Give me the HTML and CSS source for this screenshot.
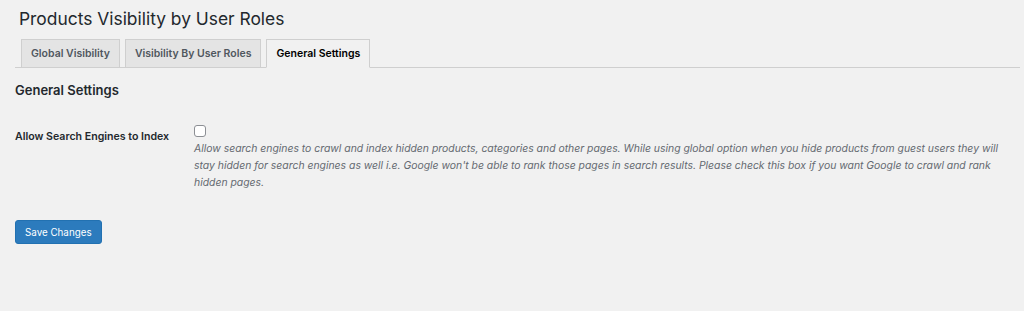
FILE: index.html
```html
<!DOCTYPE html>
<html lang="en">
<head>
    <meta charset="UTF-8">
    <meta name="viewport" content="width=device-width, initial-scale=1.0">
    <title>Products Visibility by User Roles</title>
    <link rel="stylesheet" href="styles.css">
</head>
<body>

<div class="wrap">
    <h1 class="page-title">Products Visibility by User Roles</h1>

    <nav class="nav-tabs">
        <a class="nav-tab" href="#">Global Visibility</a>
        <a class="nav-tab" href="#">Visibility By User Roles</a>
        <a class="nav-tab active" href="#">General Settings</a>
    </nav>

    <form class="settings">
        <h2 class="section-title">General Settings</h2>

        <div class="form-row">
            <label class="row-label" for="allow_index">Allow Search Engines to Index</label>
            <div class="row-field">
                <input type="checkbox" id="allow_index" class="check">
                <p class="description">Allow search engines to crawl and index hidden products, categories and other pages. While using global option when you hide products from guest users they will stay hidden for search engines as well i.e. Google won't be able to rank those pages in search results. Please check this box if you want Google to crawl and rank hidden pages.</p>
            </div>
        </div>

        <button type="button" class="button-primary">Save Changes</button>
    </form>
</div>

</body>
</html>
```

FILE: styles.css
```css
body {
    margin: 0;
    background-color: #f1f1f1;
    color: #1d2327;
    font-family: Inter, "Liberation Sans", sans-serif;
}
.wrap {
    padding: 0 4px 0 15px;
}
.page-title {
    margin: 0;
    padding: 8px 0 0 4px;
    height: 31px;
    font-size: 17.4px;
    font-weight: 400;
    color: #23282d;
}
.nav-tabs {
    display: flex;
    border-bottom: 1px solid #cfcfcf;
    padding-left: 0;
}
.nav-tab {
    margin-left: 5px;
    margin-bottom: -1px;
    padding: 0 9px;
    height: 27px;
    line-height: 27px;
    font-size: 10.5px;
    font-weight: 600;
    color: #50575e;
    text-decoration: none;
    background: #e4e4e4;
    border: 1px solid #cfcfcf;
}
.nav-tab:first-child {
    margin-left: 6px;
}
.nav-tab.active {
    background: #f1f1f1;
    color: #000;
    border-bottom-color: #f1f1f1;
}
.section-title {
    margin: 0;
    padding-top: 14px;
    height: 30px;
    font-size: 13px;
    font-weight: 600;
    color: #23282d;
}
.form-row {
    display: flex;
    padding-top: 13px;
}
.row-label {
    width: 179px;
    flex-shrink: 0;
    padding-top: 5px;
    font-size: 10.6px;
    font-weight: 600;
    color: #23282d;
}
.row-field {
    flex: 1;
    padding-right: 15px;
}
.check {
    appearance: none;
    display: block;
    margin: 0;
    width: 12px;
    height: 12px;
    border: 1px solid #8c8f94;
    border-radius: 3px;
    background: #fff;
}
.description {
    margin: 3px 0 0;
    font-size: 10.4px;
    line-height: 17px;
    font-style: italic;
    color: #646970;
}
.button-primary {
    display: block;
    margin-top: 29px;
    padding: 0 9px;
    height: 24px;
    font-family: inherit;
    font-size: 9.8px;
    color: #fff;
    background: #2c7bbd;
    border: 1px solid #2271b1;
    border-radius: 3px;
}
```
